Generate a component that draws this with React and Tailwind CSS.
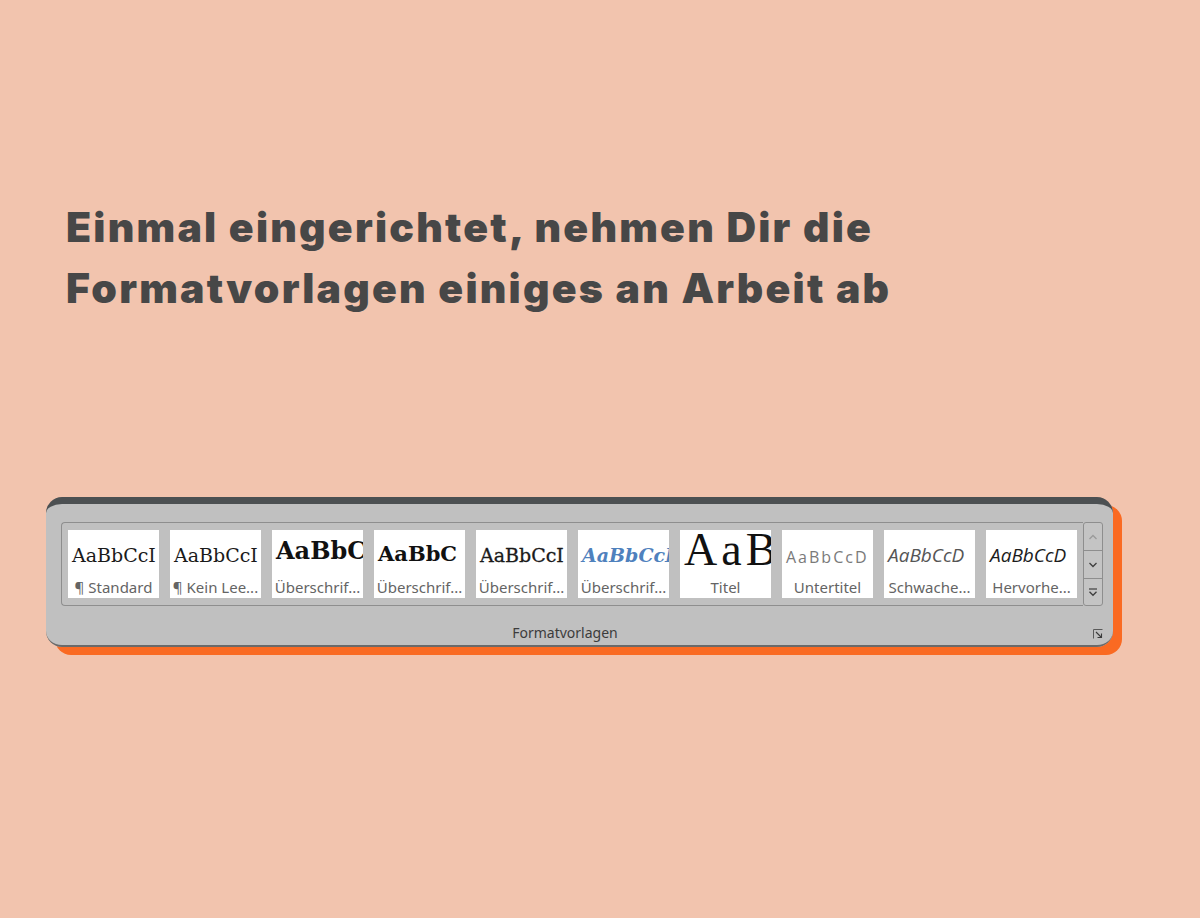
import React from "react";

const serif = { fontFamily: '"DejaVu Serif", "Liberation Serif", serif' };
const times = { fontFamily: '"Liberation Serif", "DejaVu Serif", serif' };
const sans = { fontFamily: '"Open Sans", "Noto Sans", sans-serif' };
const ui = { fontFamily: '"Noto Sans", "Open Sans", sans-serif' };

const styles = [
  { preview: "AaBbCcI", label: "¶ Standard", cls: "text-[19px] text-[#1a1a1a]", font: serif },
  { preview: "AaBbCcI", label: "¶ Kein Lee...", cls: "text-[19px] text-[#1a1a1a]", font: serif },
  { preview: "AaBbC", label: "Überschrif...", cls: "text-[24px] font-bold text-[#111]", font: serif },
  { preview: "AaBbC", label: "Überschrif...", cls: "text-[21px] font-bold text-[#111]", font: serif },
  { preview: "AaBbCcI", label: "Überschrif...", cls: "text-[19px] text-[#1a1a1a] [-webkit-text-stroke:0.3px_#1a1a1a]", font: serif },
  { preview: "AaBbCcI", label: "Überschrif...", cls: "text-[19px] italic font-bold text-[#4f81bd]", font: serif },
  { preview: "AaB", label: "Titel", cls: "text-[46px] tracking-[4px] text-[#111] leading-none", font: times, title: true },
  { preview: "AaBbCcD", label: "Untertitel", cls: "text-[16px] tracking-[2px] text-[#7a7a7a]", font: sans },
  { preview: "AaBbCcD", label: "Schwache...", cls: "text-[19px] italic text-[#555]", font: sans },
  { preview: "AaBbCcD", label: "Hervorhe...", cls: "text-[19px] italic text-[#1c1c1c]", font: sans },
];

function StyleTile({ s }) {
  return (
    <div className="w-[91px] h-[68px] bg-white flex flex-col overflow-hidden shrink-0">
      <div
        className={
          "h-[46px] flex items-end pl-[4px] whitespace-nowrap overflow-hidden " +
          (s.title ? "pb-[3px]" : "pb-[7px]")
        }
      >
        <span className={s.cls} style={s.font}>
          {s.preview}
        </span>
      </div>
      <div
        className="h-[22px] text-[15px] leading-[23px] text-[#646464] text-center whitespace-nowrap"
        style={ui}
      >
        {s.label}
      </div>
    </div>
  );
}

function ScrollColumn() {
  return (
    <div className="w-[20px] h-[84px] flex flex-col border border-[#8e8e8e] rounded-[3px] bg-[#c4c4c4] shrink-0">
      <div className="h-[28px] flex items-center justify-center border-b border-[#8e8e8e]">
        <svg width="10" height="6" viewBox="0 0 10 6">
          <path d="M1.5 5 L5 1.5 L8.5 5" fill="none" stroke="#9a9a9a" strokeWidth="1.3" />
        </svg>
      </div>
      <div className="h-[28px] flex items-center justify-center border-b border-[#8e8e8e]">
        <svg width="10" height="6" viewBox="0 0 10 6">
          <path d="M1.5 1 L5 4.5 L8.5 1" fill="none" stroke="#3e3e3e" strokeWidth="1.3" />
        </svg>
      </div>
      <div className="flex-1 flex items-center justify-center">
        <svg width="10" height="10" viewBox="0 0 10 10">
          <path d="M1 2 H9" stroke="#3e3e3e" strokeWidth="1.2" />
          <path d="M1.5 4.8 L5 8.3 L8.5 4.8" fill="none" stroke="#3e3e3e" strokeWidth="1.3" />
        </svg>
      </div>
    </div>
  );
}

export default function App() {
  return (
    <div className="min-h-[918px] w-full bg-[#f2c4ae] pt-[197px]">
      <h1
        className="pl-[66px] text-[41px] leading-[61px] font-black text-[#474747] tracking-[0.054em]"
        style={{ fontFamily: '"Inter", "Open Sans", sans-serif' }}
      >
        Einmal eingerichtet, nehmen Dir die
        <br />
        Formatvorlagen einiges an Arbeit ab
      </h1>

      <div className="mt-[178px] ml-[46px] w-[1067px] rounded-[16px] shadow-[9px_8px_0_0_#fa6a22]">
        <div className="rounded-[16px] bg-[#c0c0c0] border-t-[7px] border-t-[#4c5052] border-b-2 border-b-[#6a6a6a] pt-[18px] pl-[15px] pr-[10px]">
          <div className="flex items-start">
            <div className="flex-1 h-[84px] border border-[#8e8e8e] border-r-0 rounded-l-[4px] pl-[6px] pt-[7px] flex gap-[11px]">
              {styles.map((s, i) => (
                <StyleTile key={i} s={s} />
              ))}
            </div>
            <ScrollColumn />
          </div>
          <div className="h-[39px] flex items-center relative">
            <div
              className="flex-1 text-center pr-[34px] text-[14px] text-[#3c3c3c] pt-[13px]"
              style={ui}
            >
              Formatvorlagen
            </div>
            <svg className="absolute right-[0px] bottom-[6px]" width="10" height="10" viewBox="0 0 10 10">
              <path d="M0.5 9.5 V0.5 H9.5" fill="none" stroke="#5a5a5a" strokeWidth="1" />
              <path d="M3 3 L8.5 8.5 M8.5 4.5 V8.5 H4.5" fill="none" stroke="#3a3a3a" strokeWidth="1.1" />
            </svg>
          </div>
        </div>
      </div>
    </div>
  );
}
